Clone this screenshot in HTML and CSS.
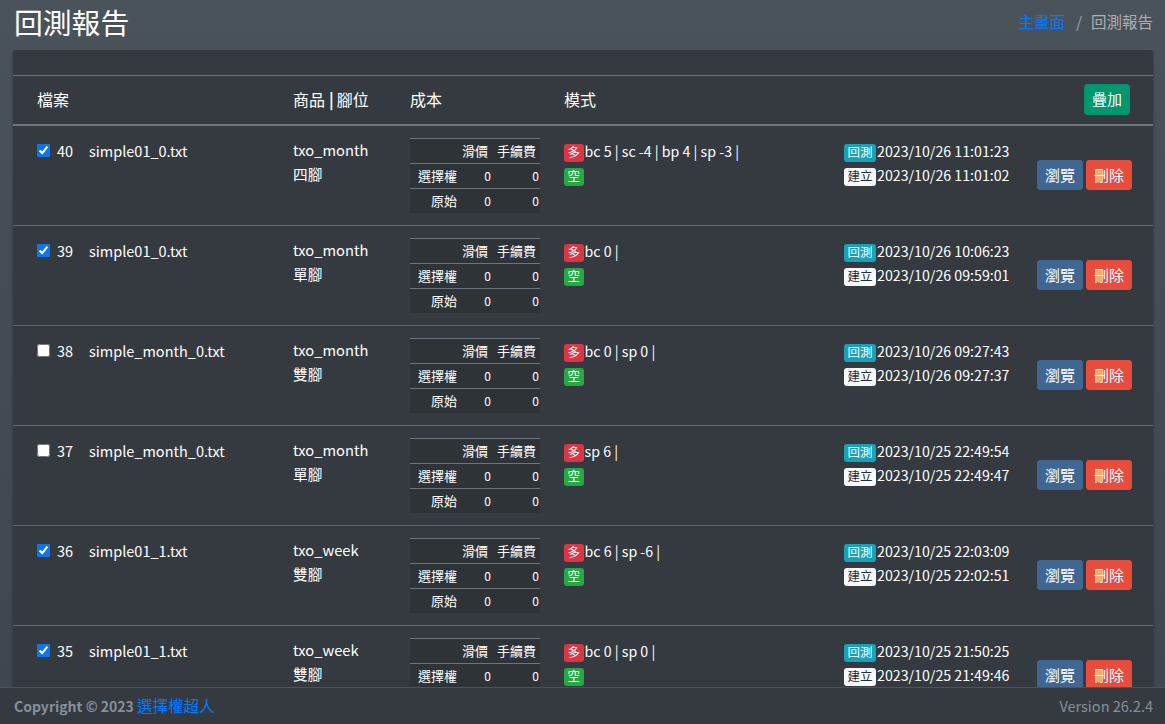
FILE: index.html
```html
<!DOCTYPE html>
<html lang="zh-Hant">
<head>
<meta charset="utf-8">
<title>回測報告</title>
<link rel="stylesheet" href="styles.css">
</head>
<body>
<div class="page">
  <header class="content-header">
    <h1 class="title">回測報告</h1>
    <ol class="breadcrumb">
      <li><a href="#" class="crumb-link">主畫面</a></li>
      <li class="crumb-sep">/</li>
      <li class="crumb-active">回測報告</li>
    </ol>
  </header>
  <main class="main">
    <div class="card">
      <div class="card-header"></div>
      <div class="thead grid-row">
        <div class="cell">檔案</div>
        <div class="cell">商品<b class="pipe">|</b>腳位</div>
        <div class="cell">成本</div>
        <div class="cell">模式</div>
        <div class="cell"></div>
        <div class="cell cell-right"><button class="btn btn-add">疊加</button></div>
      </div>

      <div class="trow grid-row">
        <div class="cell file"><input type="checkbox" class="chk" checked><span class="num">40</span><span>simple01_0.txt</span></div>
        <div class="cell lines"><div>txo_month</div><div>四腳</div></div>
        <div class="cell"><div class="cost"><div></div><div class="ch">滑價</div><div class="ch">手續費</div><div class="cl">選擇權</div><div class="cv">0</div><div class="cv">0</div><div class="cl last">原始</div><div class="cv last">0</div><div class="cv last">0</div></div></div>
        <div class="cell lines small"><div><span class="badge b-red">多</span>bc 5 | sc -4 | bp 4 | sp -3 |</div><div><span class="badge b-green">空</span></div></div>
        <div class="cell lines small"><div><span class="badge b-cyan">回測</span>2023/10/26 11:01:23</div><div><span class="badge b-light">建立</span>2023/10/26 11:01:02</div></div>
        <div class="cell actions"><button class="btn btn-view">瀏覽</button><button class="btn btn-del">刪除</button></div>
      </div>

      <div class="trow grid-row">
        <div class="cell file"><input type="checkbox" class="chk" checked><span class="num">39</span><span>simple01_0.txt</span></div>
        <div class="cell lines"><div>txo_month</div><div>單腳</div></div>
        <div class="cell"><div class="cost"><div></div><div class="ch">滑價</div><div class="ch">手續費</div><div class="cl">選擇權</div><div class="cv">0</div><div class="cv">0</div><div class="cl last">原始</div><div class="cv last">0</div><div class="cv last">0</div></div></div>
        <div class="cell lines small"><div><span class="badge b-red">多</span>bc 0 |</div><div><span class="badge b-green">空</span></div></div>
        <div class="cell lines small"><div><span class="badge b-cyan">回測</span>2023/10/26 10:06:23</div><div><span class="badge b-light">建立</span>2023/10/26 09:59:01</div></div>
        <div class="cell actions"><button class="btn btn-view">瀏覽</button><button class="btn btn-del">刪除</button></div>
      </div>

      <div class="trow grid-row">
        <div class="cell file"><input type="checkbox" class="chk"><span class="num">38</span><span>simple_month_0.txt</span></div>
        <div class="cell lines"><div>txo_month</div><div>雙腳</div></div>
        <div class="cell"><div class="cost"><div></div><div class="ch">滑價</div><div class="ch">手續費</div><div class="cl">選擇權</div><div class="cv">0</div><div class="cv">0</div><div class="cl last">原始</div><div class="cv last">0</div><div class="cv last">0</div></div></div>
        <div class="cell lines small"><div><span class="badge b-red">多</span>bc 0 | sp 0 |</div><div><span class="badge b-green">空</span></div></div>
        <div class="cell lines small"><div><span class="badge b-cyan">回測</span>2023/10/26 09:27:43</div><div><span class="badge b-light">建立</span>2023/10/26 09:27:37</div></div>
        <div class="cell actions"><button class="btn btn-view">瀏覽</button><button class="btn btn-del">刪除</button></div>
      </div>

      <div class="trow grid-row">
        <div class="cell file"><input type="checkbox" class="chk"><span class="num">37</span><span>simple_month_0.txt</span></div>
        <div class="cell lines"><div>txo_month</div><div>單腳</div></div>
        <div class="cell"><div class="cost"><div></div><div class="ch">滑價</div><div class="ch">手續費</div><div class="cl">選擇權</div><div class="cv">0</div><div class="cv">0</div><div class="cl last">原始</div><div class="cv last">0</div><div class="cv last">0</div></div></div>
        <div class="cell lines small"><div><span class="badge b-red">多</span>sp 6 |</div><div><span class="badge b-green">空</span></div></div>
        <div class="cell lines small"><div><span class="badge b-cyan">回測</span>2023/10/25 22:49:54</div><div><span class="badge b-light">建立</span>2023/10/25 22:49:47</div></div>
        <div class="cell actions"><button class="btn btn-view">瀏覽</button><button class="btn btn-del">刪除</button></div>
      </div>

      <div class="trow grid-row">
        <div class="cell file"><input type="checkbox" class="chk" checked><span class="num">36</span><span>simple01_1.txt</span></div>
        <div class="cell lines"><div>txo_week</div><div>雙腳</div></div>
        <div class="cell"><div class="cost"><div></div><div class="ch">滑價</div><div class="ch">手續費</div><div class="cl">選擇權</div><div class="cv">0</div><div class="cv">0</div><div class="cl last">原始</div><div class="cv last">0</div><div class="cv last">0</div></div></div>
        <div class="cell lines small"><div><span class="badge b-red">多</span>bc 6 | sp -6 |</div><div><span class="badge b-green">空</span></div></div>
        <div class="cell lines small"><div><span class="badge b-cyan">回測</span>2023/10/25 22:03:09</div><div><span class="badge b-light">建立</span>2023/10/25 22:02:51</div></div>
        <div class="cell actions"><button class="btn btn-view">瀏覽</button><button class="btn btn-del">刪除</button></div>
      </div>

      <div class="trow grid-row">
        <div class="cell file"><input type="checkbox" class="chk" checked><span class="num">35</span><span>simple01_1.txt</span></div>
        <div class="cell lines"><div>txo_week</div><div>雙腳</div></div>
        <div class="cell"><div class="cost"><div></div><div class="ch">滑價</div><div class="ch">手續費</div><div class="cl">選擇權</div><div class="cv">0</div><div class="cv">0</div><div class="cl last">原始</div><div class="cv last">0</div><div class="cv last">0</div></div></div>
        <div class="cell lines small"><div><span class="badge b-red">多</span>bc 0 | sp 0 |</div><div><span class="badge b-green">空</span></div></div>
        <div class="cell lines small"><div><span class="badge b-cyan">回測</span>2023/10/25 21:50:25</div><div><span class="badge b-light">建立</span>2023/10/25 21:49:46</div></div>
        <div class="cell actions"><button class="btn btn-view">瀏覽</button><button class="btn btn-del">刪除</button></div>
      </div>
    </div>
  </main>
  <footer class="footer">
    <div class="copy">Copyright © 2023 <a href="#" class="foot-link">選擇權超人</a></div>
    <div class="version">Version 26.2.4</div>
  </footer>
</div>
</body>
</html>
```

FILE: styles.css
```css
* { box-sizing: border-box; }
html, body { margin: 0; padding: 0; }
body {
  font-family: "Noto Sans CJK TC", "Noto Sans", sans-serif;
  font-size: 16px;
  color: #ffffff;
  background: #454d55;
}
.page {
  height: 100vh;
  display: flex;
  flex-direction: column;
  overflow: hidden;
  background: linear-gradient(180deg, #4b535a 0%, #454c53 40%, #3f464d 100%);
}
.content-header {
  display: flex;
  justify-content: space-between;
  align-items: flex-start;
  height: 50px;
  flex: none;
  padding: 0 12px 0 14px;
}
.title {
  margin: 0;
  padding-top: 5px;
  font-size: 28.8px;
  font-weight: 400;
  line-height: 1.2;
}
.breadcrumb {
  list-style: none;
  margin: 9px 0 0;
  padding: 0;
  display: flex;
  gap: 9px;
  line-height: 24px;
  font-size: 15.5px;
}
.crumb-link { color: #007bff; text-decoration: none; }
.crumb-sep { color: #9aa1a8; padding: 0 0 0 2px; }
.crumb-active { color: #a9b0b7; }

.main {
  flex: 1;
  overflow: hidden;
  padding: 0 12px 0 13px;
}
.card {
  background: #343a40;
  border-radius: 4px;
  box-shadow: 0 0 1px rgba(0,0,0,.25), 0 1px 3px rgba(0,0,0,.3);
}
.card-header {
  height: 26px;
  border-bottom: 1px solid #6c757d;
}
.grid-row {
  display: grid;
  grid-template-columns: 256px 117px 154px 280px 193px 116px;
  padding: 0 12px;
}
.cell { padding-left: 12px; }
.cell-right { display: flex; justify-content: flex-end; padding-right: 11px; }
.pipe { font-weight: 700; margin: 0 3px 0 4px; }
.thead {
  height: 50px;
  border-bottom: 2px solid #6c757d;
  align-items: center;
  padding-bottom: 2px;
}
.trow {
  height: 100px;
  border-bottom: 1px solid #5f666d;
  padding-top: 12px;
  align-items: start;
}
.file {
  display: flex;
  align-items: center;
  height: 25px;
  font-size: 14.5px;
}
.chk {
  width: 13px;
  height: 13px;
  margin: 0 7px 0 0;
  accent-color: #0b74f5;
}
.num { width: 32px; }
.lines { line-height: 24px; font-size: 14.7px; }
.lines.small { font-size: 14.2px; padding-top: 1px; }
.cost {
  display: grid;
  grid-template-columns: 52px 30px 48px;
  width: 130px;
  background: #2e3338;
  border-top: 1px solid #6c757d;
  font-size: 13px;
  line-height: 24px;
}
.cost > div {
  border-bottom: 1px solid #6c757d;
  text-align: right;
}
.cost > .last { border-bottom: none; }
.ch { padding-right: 4px; }
.cl { padding-right: 5px; }
.cv { padding-right: 1px; font-size: 12px; }

.badge {
  display: inline-block;
  font-size: 12.5px;
  line-height: 1;
  padding: 2px 3.5px 3px;
  border-radius: 3px;
  vertical-align: 0;
  margin-right: 1px;
}
.b-red { background: #dc3545; color: #fff; }
.b-green { background: #28a745; color: #fff; }
.b-cyan { background: #17a2b8; color: #fff; }
.b-light { background: #f8f9fa; color: #1f2d3d; }

.actions {
  align-self: center;
  display: flex;
  gap: 3px;
  margin-top: -13px;
}
.btn {
  font-family: inherit;
  font-size: 15px;
  color: #fff;
  border: 1px solid transparent;
  border-radius: 3px;
  height: 30px;
  width: 46px;
  padding: 0;
  line-height: 28px;
  cursor: pointer;
}
.btn-add { background: #00966e; border-color: #00936b; height: 31px; }
.btn-view { background: #3f6791; border-color: #3f6791; }
.btn-del { background: #e74c3c; border-color: #e74c3c; }

.footer {
  flex: none;
  height: 37px;
  background: #343a40;
  border-top: 1px solid #4b545c;
  display: flex;
  justify-content: space-between;
  align-items: center;
  padding: 0 12px 2px 14px;
  color: #869099;
  font-size: 14px;
}
.copy { font-weight: 700; }
.foot-link { color: #007bff; text-decoration: none; font-weight: 400; font-size: 15.5px; }
.version { font-size: 14.5px; }
```
